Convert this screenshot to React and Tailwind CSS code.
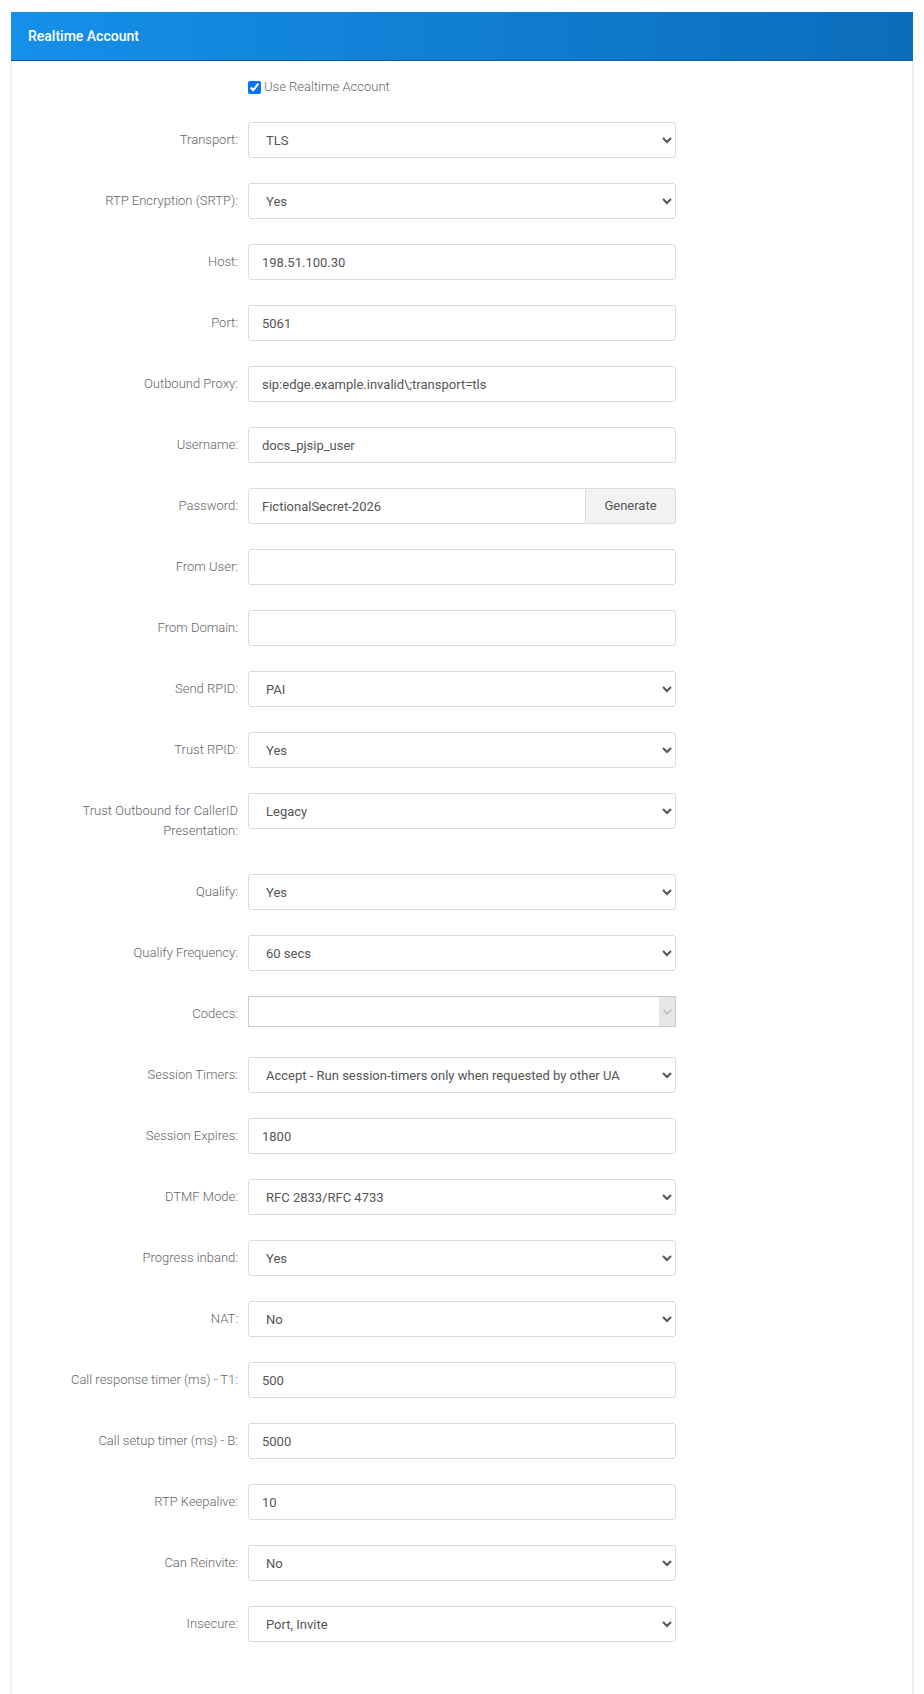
import React from 'react';

const fields = [
  { label: 'Transport:', type: 'select', value: 'TLS', options: ['UDP', 'TCP', 'TLS'] },
  { label: 'RTP Encryption (SRTP):', type: 'select', value: 'Yes', options: ['No', 'Yes'] },
  { label: 'Host:', type: 'text', value: '198.51.100.30' },
  { label: 'Port:', type: 'text', value: '5061' },
  { label: 'Outbound Proxy:', type: 'text', value: 'sip:edge.example.invalid\\;transport=tls' },
  { label: 'Username:', type: 'text', value: 'docs_pjsip_user' },
  { label: 'Password:', type: 'password', value: 'FictionalSecret-2026' },
  { label: 'From User:', type: 'text', value: '' },
  { label: 'From Domain:', type: 'text', value: '' },
  { label: 'Send RPID:', type: 'select', value: 'PAI', options: ['No', 'RPID', 'PAI', 'Both'] },
  { label: 'Trust RPID:', type: 'select', value: 'Yes', options: ['No', 'Yes'] },
  { label: 'Trust Outbound for CallerID Presentation:', type: 'select', value: 'Legacy', options: ['Legacy', 'Yes', 'No'], twoLine: true },
  { label: 'Qualify:', type: 'select', value: 'Yes', options: ['No', 'Yes'] },
  { label: 'Qualify Frequency:', type: 'select', value: '60 secs', options: ['30 secs', '60 secs', '120 secs'] },
  { label: 'Codecs:', type: 'codecs' },
  { label: 'Session Timers:', type: 'select', value: 'Accept - Run session-timers only when requested by other UA', options: ['Accept - Run session-timers only when requested by other UA', 'Originate', 'Refuse'] },
  { label: 'Session Expires:', type: 'text', value: '1800' },
  { label: 'DTMF Mode:', type: 'select', value: 'RFC 2833/RFC 4733', options: ['RFC 2833/RFC 4733', 'Inband', 'SIP INFO', 'Auto'] },
  { label: 'Progress inband:', type: 'select', value: 'Yes', options: ['No', 'Yes'] },
  { label: 'NAT:', type: 'select', value: 'No', options: ['No', 'Yes'] },
  { label: 'Call response timer (ms) - T1:', type: 'text', value: '500' },
  { label: 'Call setup timer (ms) - B:', type: 'text', value: '5000' },
  { label: 'RTP Keepalive:', type: 'text', value: '10' },
  { label: 'Can Reinvite:', type: 'select', value: 'No', options: ['No', 'Yes'] },
  { label: 'Insecure:', type: 'select', value: 'Port, Invite', options: ['No', 'Port', 'Invite', 'Port, Invite'] },
];

const inputCls = 'w-full h-[36px] border border-[#dcdcdc] rounded-[3px] bg-white px-[13px] text-[13px] text-[#555] outline-none';

const Control = ({ f }) => {
  if (f.type === 'select') {
    return (
      <select defaultValue={f.value} className="w-full h-[36px] border border-[#dcdcdc] rounded-[3px] bg-white pl-[13px] pr-[4px] text-[13px] text-[#555] outline-none">
        {f.options.map(o => <option key={o}>{o}</option>)}
      </select>
    );
  }
  if (f.type === 'password') {
    return (
      <div className="flex">
        <input type="text" defaultValue={f.value} className="flex-1 min-w-0 h-[36px] border border-[#dcdcdc] rounded-l-[3px] bg-white px-[13px] text-[13px] text-[#555] outline-none" />
        <button className="w-[90px] h-[36px] border border-l-0 border-[#dcdcdc] rounded-r-[3px] bg-[#f2f2f2] text-[13px] text-[#555]">Generate</button>
      </div>
    );
  }
  if (f.type === 'codecs') {
    return (
      <div className="flex h-[31px] border border-[#cccccc] bg-white">
        <div className="flex-1" />
        <div className="w-[16px] bg-[#e6e6e6] flex items-center justify-center">
          <svg width="9" height="6" viewBox="0 0 9 6" fill="none" stroke="#888" strokeWidth="1">
            <path d="M0.5 0.8 L4.5 4.8 L8.5 0.8" />
          </svg>
        </div>
      </div>
    );
  }
  return <input type="text" defaultValue={f.value} className={inputCls} />;
};

export default function App() {
  return (
    <div className="min-h-[1694px] bg-white pt-[12px]" style={{ fontFamily: 'Roboto, "Liberation Sans", sans-serif' }}>
      <div className="mx-[11px] border border-t-0 border-[#ececec] shadow-[0_0_6px_rgba(0,0,0,0.05)] bg-white">
        {/* Header */}
        <div className="h-[49px] -mx-px flex items-center pl-[17px] bg-gradient-to-r from-[#1590ea] to-[#0b6dbb] border-b border-[#0a64ad]">
          <h1 className="text-[14px] font-medium text-white">Realtime Account</h1>
        </div>

        <div className="pt-[16px] pb-[80px]">
          {/* Checkbox */}
          <div className="flex items-center h-[20px] mb-[25px]">
            <div className="w-[236px] flex-none" />
            <label className="flex items-center gap-[3px] text-[13px] font-light text-[#666]">
              <input type="checkbox" defaultChecked className="w-[13px] h-[13px] m-0" />
              Use Realtime Account
            </label>
          </div>

          {fields.map(f => (
            <div key={f.label} className="flex items-start mb-[25px]">
              <label className="w-[236px] flex-none pr-[10px] pl-[40px] py-[8px] text-right text-[13px] leading-[20px] font-light text-[#666]">
                {f.twoLine ? (<>Trust Outbound for CallerID<br />Presentation:</>) : f.label}
              </label>
              <div className="w-[428px] flex-none">
                <Control f={f} />
              </div>
            </div>
          ))}
        </div>
      </div>
    </div>
  );
}
